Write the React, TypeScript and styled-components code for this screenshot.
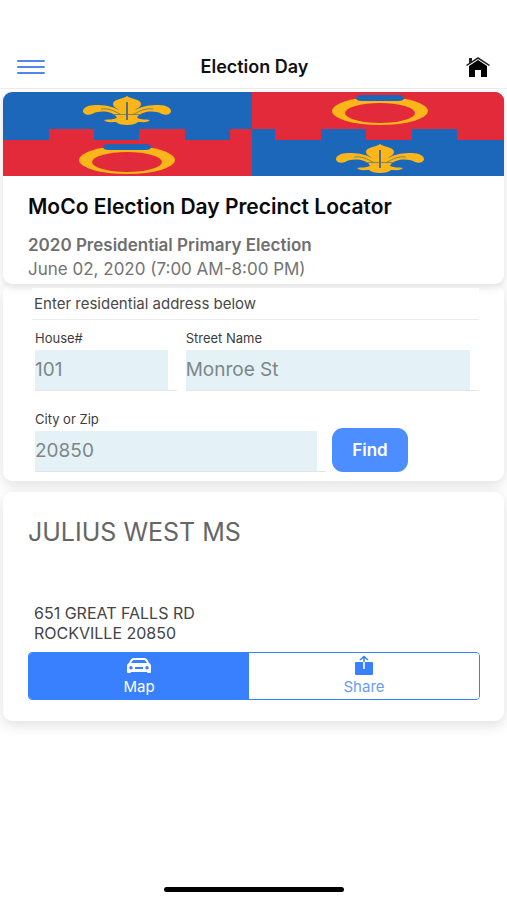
import React from "react";
import styled, { createGlobalStyle } from "styled-components";

const GlobalStyle = createGlobalStyle`
  *, *::before, *::after { box-sizing: border-box; }
  body { margin: 0; background: #fff; font-family: Inter, "Liberation Sans", sans-serif; color: #2c2c2c; }
  button, input { font-family: inherit; }
  h1, h2, p { margin: 0; }
`;

const Page = styled.div`
  min-height: 100vh;
  display: flex;
  flex-direction: column;
`;

const TopBar = styled.header`
  display: grid;
  grid-template-columns: 32px 1fr 32px;
  align-items: center;
  height: 89px;
  padding: 46px 13px 0 15px;
  border-bottom: 1px solid #ececec;
`;

const IconButton = styled.button`
  display: flex;
  align-items: center;
  justify-content: center;
  height: 32px;
  padding: 0;
  border: 0;
  background: none;
  color: inherit;
`;

const PageTitle = styled.h1`
  font-size: 18px;
  line-height: 24px;
  font-weight: 600;
  text-align: center;
  color: #111;
`;

const Content = styled.main`
  display: flex;
  flex-direction: column;
  padding: 3px 3px 0;
`;

const Card = styled.section`
  border-radius: 9px;
  background: #fff;
  box-shadow: 0 4px 14px rgba(0, 0, 0, 0.13);
`;

const IntroCard = styled(Card)`
  position: relative;
  z-index: 1;
  overflow: hidden;
  box-shadow: 0 3px 8px rgba(0, 0, 0, 0.13);
`;

const Banner = styled.svg`
  display: block;
  width: 100%;
  height: 84px;
`;

const IntroText = styled.div`
  padding: 17px 25px 3px;
`;

const CardTitle = styled.h2`
  margin-bottom: 12px;
  font-size: 21px;
  line-height: 28px;
  font-weight: 600;
  color: #0a0a0a;
`;

const ElectionInfo = styled.p<{ $strong?: boolean }>`
  font-size: 17px;
  line-height: 24px;
  font-weight: ${(p) => (p.$strong ? 600 : 400)};
  color: ${(p) => (p.$strong ? "#6f6f6f" : "#747474")};
`;

const SearchCard = styled(Card)`
  padding: 4px 25px 9px;
`;

const Prompt = styled.p`
  position: relative;
  z-index: 2;
  margin-left: 4px;
  padding: 0 2px;
  font-size: 15px;
  line-height: 31px;
  background: #fff;
  border-bottom: 1px solid #ececec;
  color: #484848;
`;

const AddressForm = styled.form`
  display: flex;
  flex-direction: column;
  gap: 20px;
  padding: 10px 0 0 7px;
`;

const FieldRow = styled.div<{ $columns: string }>`
  display: grid;
  grid-template-columns: ${(p) => p.$columns};
  align-items: end;
  column-gap: ${(p) => (p.$columns.endsWith("auto") ? 6 : 9)}px;
`;

const Field = styled.div`
  display: flex;
  flex-direction: column;
  gap: 4px;
  padding-right: 9px;
  border-bottom: 1px solid #e3e6e8;
  min-width: 0;
`;

const Label = styled.label`
  font-size: 13px;
  line-height: 16px;
  color: #3c3c3c;
`;

const TextInput = styled.input`
  width: 100%;
  height: 40px;
  padding: 0 0 2px;
  border: 0;
  border-radius: 0;
  background: #e4f2f7;
  font-size: 19px;
  color: #7f8688;
`;

const FindButton = styled.button`
  width: 76px;
  height: 44px;
  padding: 0;
  border: 0;
  border-radius: 11px;
  background: #4c8dff;
  color: #fff;
  font-size: 17px;
  font-weight: 600;
`;

const FindSlot = styled.div`
  display: flex;
  padding-right: 71px;
`;

const PlaceCard = styled(Card)`
  margin-top: 11px;
  padding: 24px 24px 21px 25px;
`;

const PlaceName = styled.h2`
  font-size: 25px;
  line-height: 32px;
  font-weight: 400;
  color: #666;
`;

const Address = styled.address`
  padding: 55px 6px 9px;
  font-size: 16px;
  line-height: 20px;
  font-style: normal;
  color: #444;
`;

const Actions = styled.div`
  display: grid;
  grid-template-columns: 220fr 230fr;
  border: 1px solid #3880ff;
  border-radius: 4px;
  overflow: hidden;
`;

const Action = styled.button<{ $filled?: boolean }>`
  display: flex;
  flex-direction: column;
  align-items: center;
  gap: 2px;
  height: 46px;
  padding: 2px 0 0;
  border: 0;
  font-size: 15px;
  line-height: 20px;
  background: ${(p) => (p.$filled ? "#3880ff" : "#fff")};
  color: ${(p) => (p.$filled ? "#fff" : "#6b9cf5")};
`;

const HomeIndicator = styled.div`
  width: 180px;
  height: 5px;
  margin: auto auto 8px;
  border-radius: 3px;
  background: #000;
`;

function Fleur({ x, y }: { x: number; y: number }) {
  return (
    <g transform={`translate(${x} ${y})`}>
      <path
        fill="#fcb61a"
        d="M0 0C3 3 14 3 14 8C14 11 10 12 8 14C15 10 23 9 32 9C39 9 44 12 44 15C44 18 39 20 35 18C29 15 22 15 16 17C12 18 11 20 10 22C15 24 18 23 23 24C20 27 16 26 11 26C9 28 5 29 0 29C-5 29-9 28-11 26C-16 26-20 27-23 24C-18 23-15 24-10 22C-11 20-12 18-16 17C-22 15-29 15-35 18C-39 20-44 18-44 15C-44 12-39 9-32 9C-23 9-15 10-8 14C-10 12-14 11-14 8C-14 3-3 3 0 0Z"
      />
      <path
        fill="none"
        stroke="#7f8460"
        strokeWidth="1"
        d="M-26 13C-18 12-13 15-7 18M26 13C18 12 13 15 7 18M-14 18.500H14"
      />
      <path stroke="#5a7078" strokeWidth="2" d="M0 6V24" />
    </g>
  );
}

function Ring({ x, y }: { x: number; y: number }) {
  return (
    <g transform={`translate(${x} ${y})`}>
      <ellipse rx="48" ry="14" fill="#fcb61a" />
      <ellipse cy="2" rx="35" ry="10" fill="#e32a3a" />
      <path fill="#1c67ba" d="M-18-16H18C22-16 24-15 24-13S22-10 18-10H-18C-22-10-24-11-24-13S-22-16-18-16Z" />
    </g>
  );
}

function CountyFlag() {
  return (
    <Banner viewBox="0 0 501 84" preserveAspectRatio="none" role="img" aria-label="County flag">
      <path fill="#1c67ba" d="M0 0H501V84H0Z" />
      <path fill="#e32a3a" d="M0 48H46V37H91V48H136V37H182V48H227V37H249V84H0Z" />
      <path fill="#e32a3a" d="M249 0H501V48H454V37H409V48H363V37H318V48H272V37H249Z" />
      <Fleur x={124} y={4} />
      <Ring x={124} y={68} />
      <Ring x={377} y={19} />
      <Fleur x={377} y={52} />
    </Banner>
  );
}

const MenuIcon = () => (
  <svg width="28" height="16" viewBox="0 0 28 16" fill="none" stroke="#5286ee" strokeWidth="2" strokeLinecap="round">
    <path d="M1 2H27M1 8H27M1 14H27" />
  </svg>
);

const HouseIcon = () => (
  <svg width="24" height="20" viewBox="0 0 24 20">
    <path d="M3 1H6V4L12 0L24 8L23 9L12 2L1 9L0 8L3 6Z" fill="#222" />
    <path d="M12 3L21 9V20H15V13H9V20H3V9Z" fill="#000" />
  </svg>
);

const CarIcon = () => (
  <svg width="26" height="20" viewBox="0 0 26 20">
    <path
      fill="currentColor"
      fillRule="evenodd"
      d="M8 3H18C20 3 21 4 22 6L23 8C25 9 25 10 25 12V17C25 18 24 18 23 18S21 18 21 17H5C5 18 4 18 3 18S1 18 1 17V12C1 10 1 9 3 8L4 6C5 4 6 3 8 3ZM8 5C7 5 6 6 5 8H21C20 6 19 5 18 5ZM5 11A1.700 1.700 0 1 0 5 14.400A1.700 1.700 0 1 0 5 11ZM21 11A1.700 1.700 0 1 0 21 14.400A1.700 1.700 0 1 0 21 11ZM9 12V14H17V12Z"
    />
  </svg>
);

const ShareIcon = () => (
  <svg width="20" height="20" viewBox="0 0 20 20" fill="none">
    <path fill="#3880ff" d="M2 7H18C19 7 19 8 19 8V19C19 20 18 20 18 20H2C1 20 1 19 1 19V8C1 7 2 7 2 7Z" />
    <path stroke="#dbe8ff" strokeWidth="2" d="M10 7V14" />
    <path stroke="#3880ff" strokeWidth="1.500" d="M10 7V2M6 5L10 1.500L14 5" />
  </svg>
);

export default function App() {
  return (
    <Page>
      <GlobalStyle />
      <TopBar>
        <IconButton type="button" aria-label="Menu">
          <MenuIcon />
        </IconButton>
        <PageTitle>Election Day</PageTitle>
        <IconButton type="button" aria-label="Home">
          <HouseIcon />
        </IconButton>
      </TopBar>
      <Content>
        <IntroCard>
          <CountyFlag />
          <IntroText>
            <CardTitle>MoCo Election Day Precinct Locator</CardTitle>
            <ElectionInfo $strong>2020 Presidential Primary Election</ElectionInfo>
            <ElectionInfo>June 02, 2020 (7:00 AM-8:00 PM)</ElectionInfo>
          </IntroText>
        </IntroCard>
        <SearchCard>
          <Prompt>Enter residential address below</Prompt>
          <AddressForm onSubmit={(e) => e.preventDefault()}>
            <FieldRow $columns="142fr 294fr">
              <Field>
                <Label htmlFor="house">House#</Label>
                <TextInput id="house" defaultValue="101" />
              </Field>
              <Field>
                <Label htmlFor="street">Street Name</Label>
                <TextInput id="street" defaultValue="Monroe St" />
              </Field>
            </FieldRow>
            <FieldRow $columns="1fr auto">
              <Field>
                <Label htmlFor="city">City or Zip</Label>
                <TextInput id="city" defaultValue="20850" />
              </Field>
              <FindSlot>
                <FindButton type="submit">Find</FindButton>
              </FindSlot>
            </FieldRow>
          </AddressForm>
        </SearchCard>
        <PlaceCard>
          <PlaceName>JULIUS WEST MS</PlaceName>
          <Address>
            651 GREAT FALLS RD
            <br />
            ROCKVILLE 20850
          </Address>
          <Actions>
            <Action type="button" $filled>
              <CarIcon />
              Map
            </Action>
            <Action type="button">
              <ShareIcon />
              Share
            </Action>
          </Actions>
        </PlaceCard>
      </Content>
      <HomeIndicator />
    </Page>
  );
}
